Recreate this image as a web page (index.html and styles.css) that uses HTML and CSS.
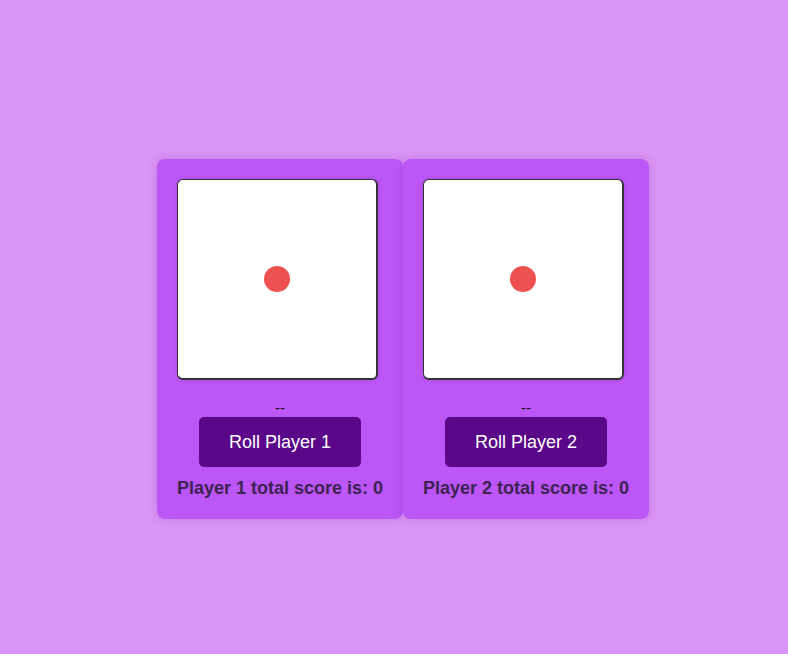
FILE: index.html
```html
<!DOCTYPE html>
<html>
<head>
<meta charset="utf-8">
<link rel="stylesheet" href="styles.css">
</head>
<body>
<div class="stage">
  <div class="board">
    <div class="card">
      <div class="die"><span class="pip"></span></div>
      <p class="roll">--</p>
      <button class="btn">Roll Player 1</button>
      <p class="score">Player 1 total score is: 0</p>
    </div>
    <div class="card">
      <div class="die"><span class="pip"></span></div>
      <p class="roll">--</p>
      <button class="btn">Roll Player 2</button>
      <p class="score">Player 2 total score is: 0</p>
    </div>
  </div>
</div>
</body>
</html>
```
FILE: styles.css
```css
html, body {
  margin: 0;
  padding: 0;
}
body {
  background: #da94f5;
  font-family: "Liberation Sans", Arial, sans-serif;
}
.stage {
  height: 654px;
  box-sizing: border-box;
  padding: 24px 0 0 18px;
  display: flex;
  align-items: center;
  justify-content: center;
}
.board {
  display: flex;
}
.card {
  background: #bc56f7;
  border-radius: 8px;
  padding: 20px;
  box-shadow: 0 0 10px rgba(90, 20, 130, 0.18);
  display: flex;
  flex-direction: column;
  align-items: center;
}
.die {
  align-self: flex-start;
  width: 198px;
  height: 198px;
  background: #fff;
  border: solid #333;
  border-width: 1px 2px 2px 1px;
  border-radius: 6px;
  box-shadow: 0 0 4px rgba(0, 0, 0, 0.15);
  display: flex;
  align-items: center;
  justify-content: center;
}
.pip {
  width: 26px;
  height: 26px;
  border-radius: 50%;
  background: #ec5050;
}
.roll {
  margin: 18px 0 0;
  font-size: 15px;
  line-height: 19px;
  height: 19px;
  color: #111;
}
.btn {
  width: 162px;
  height: 50px;
  border: none;
  border-radius: 5px;
  background: #5a0889;
  color: #fff;
  font-family: "Liberation Sans", Arial, sans-serif;
  font-size: 18px;
  padding: 0;
}
.score {
  margin: 10px 0 0;
  font-size: 18px;
  line-height: 22px;
  font-weight: bold;
  color: #3b2352;
  white-space: nowrap;
}
```
